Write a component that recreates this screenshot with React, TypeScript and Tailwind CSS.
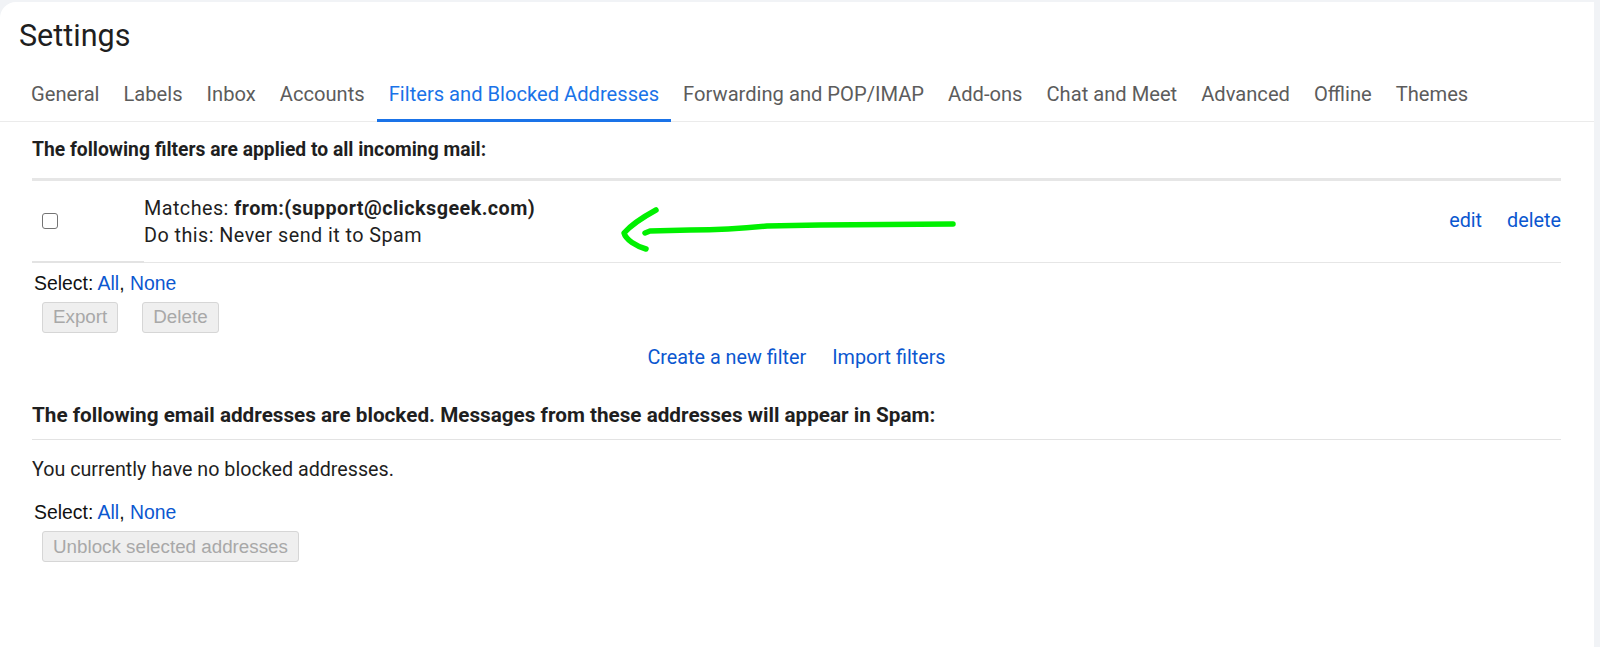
import React from 'react';

const tabs = [
    'General',
    'Labels',
    'Inbox',
    'Accounts',
    'Filters and Blocked Addresses',
    'Forwarding and POP/IMAP',
    'Add-ons',
    'Chat and Meet',
    'Advanced',
    'Offline',
    'Themes',
];

function GreenArrow() {
    return (
        <svg
            className="absolute left-[600px] top-[195px] pointer-events-none"
            width="370"
            height="70"
            viewBox="600 195 370 70"
        >
            <path
                d="M953 222 L820 223 L767 224 C740 227 720 228 690 228 L650 229 L645 231"
                fill="none"
                stroke="#00f000"
                strokeWidth="5.5"
                strokeLinecap="round"
                strokeLinejoin="round"
            />
            <path
                d="M656 208 C645 214 632 222 624 231 C626 238 636 244 646 247"
                fill="none"
                stroke="#00f000"
                strokeWidth="5.5"
                strokeLinecap="round"
                strokeLinejoin="round"
            />
        </svg>
    );
}

function GrayButton({ children }: { children: React.ReactNode }) {
    return (
        <button
            disabled
            className="h-[31px] px-[10px] rounded-[3px] border border-[#d6d6d6] bg-[#efefef] text-[#a8a8a8] text-[18.8px] font-['Liberation_Sans',Arial,sans-serif]"
        >
            {children}
        </button>
    );
}

function SelectLine() {
    return (
        <div className="text-[19.4px] leading-[24px] text-[#111] font-['Liberation_Sans',Arial,sans-serif] pl-[2px]">
            Select: <span className="text-[#0b57d0]">All</span>,{' '}
            <span className="text-[#0b57d0]">None</span>
        </div>
    );
}

export default function App() {
    return (
        <div className="min-h-screen bg-[#f1f3f6] pt-[2px] font-['Roboto',Arial,sans-serif]">
            <div className="relative bg-white rounded-tl-2xl mr-[6px] min-h-[645px]">
                {/* Header */}
                <h1 className="pl-[19px] pt-[17px] text-[30.5px] leading-[34px] text-[#1f1f1f]">
                    Settings
                </h1>

                {/* Tabs */}
                <div className="flex pl-[19px] mt-[19px] border-b border-[#ebebeb]">
                    {tabs.map((t) => {
                        const active = t === 'Filters and Blocked Addresses';
                        return (
                            <div
                                key={t}
                                className={
                                    active
                                        ? 'px-3 h-[50px] pb-[3px] flex items-center border-b-[3px] border-[#1a73e8] text-[#1a73e8] text-[20.15px] -mb-px'
                                        : 'px-3 h-[50px] pb-[3px] flex items-center border-b-[3px] border-transparent text-[#5c5c5c] text-[20.15px] -mb-px'
                                }
                            >
                                {t}
                            </div>
                        );
                    })}
                </div>

                {/* Filters */}
                <div className="pl-[32px] pr-[33px]">
                    <div className="h-[56px] flex items-center font-bold text-[19.3px] text-[#1f1f1f]">
                        The following filters are applied to all incoming mail:
                    </div>

                    <div className="flex items-stretch border-t-[3px] border-[#e6e6e6] h-[85px]">
                        <div className="w-[112px] flex items-center pl-[10px] border-b-2 border-[#e3e3e3]">
                            <div className="w-[16px] h-[16px] rounded-[3px] border border-[#747474]" />
                        </div>
                        <div className="flex-1 flex items-center justify-between border-b border-[#e6e6e6]">
                            <div className="text-[19.8px] leading-[27px] tracking-[0.45px] text-[#1f1f1f]">
                                <div>
                                    Matches: <span className="font-bold">from:(support@clicksgeek.com)</span>
                                </div>
                                <div>Do this: Never send it to Spam</div>
                            </div>
                            <div className="flex gap-[25px] text-[19.8px] text-[#0b57d0] pb-[2px]">
                                <span>edit</span>
                                <span>delete</span>
                            </div>
                        </div>
                    </div>

                    <div className="pt-[8px]">
                        <SelectLine />
                        <div className="flex gap-[24px] mt-[7px] pl-[10px]">
                            <GrayButton>Export</GrayButton>
                            <GrayButton>Delete</GrayButton>
                        </div>
                    </div>

                    <div className="flex justify-center gap-[26px] mt-[10px] text-[19.8px] text-[#0b57d0]">
                        <span>Create a new filter</span>
                        <span>Import filters</span>
                    </div>

                    {/* Blocked addresses */}
                    <div className="mt-[27px] pb-[8px] border-b border-[#e3e3e3] font-bold text-[20.7px] text-[#1f1f1f]">
                        The following email addresses are blocked. Messages from these addresses will appear in Spam:
                    </div>
                    <div className="pt-[15px] text-[19.7px] text-[#1f1f1f]">
                        You currently have no blocked addresses.
                    </div>
                    <div className="pt-[16px]">
                        <SelectLine />
                        <div className="mt-[7px] pl-[10px]">
                            <GrayButton>Unblock selected addresses</GrayButton>
                        </div>
                    </div>
                </div>

                <GreenArrow />
            </div>
        </div>
    );
}
